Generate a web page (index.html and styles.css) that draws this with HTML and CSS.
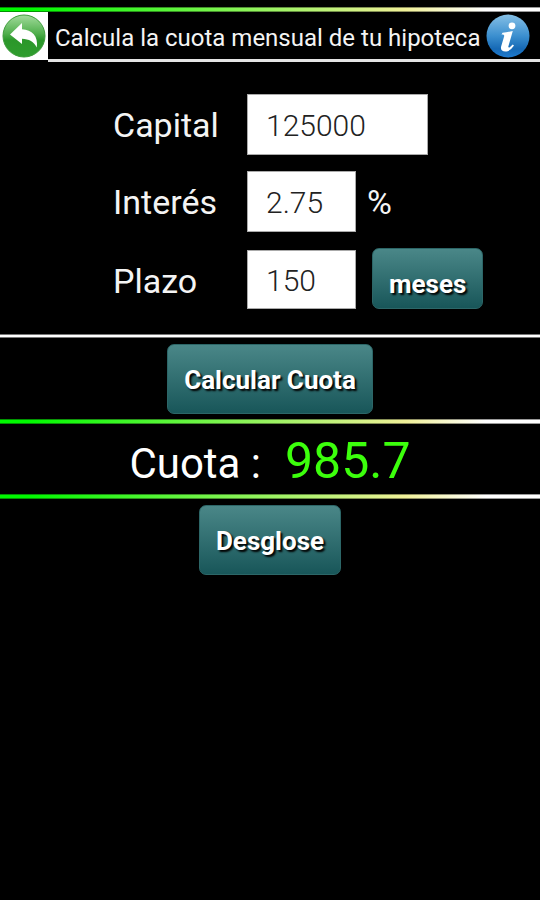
FILE: index.html
```html
<!DOCTYPE html>
<html lang="es">
<head>
<meta charset="utf-8">
<meta name="viewport" content="width=device-width, initial-scale=1">
<title>Calcula la cuota mensual de tu hipoteca</title>
<link rel="stylesheet" href="styles.css">
</head>
<body>
<header class="header">
  <div class="rule rule-gradient"></div>
  <div class="bar">
    <button class="back" type="button" aria-label="Volver">
      <svg width="44" height="44" viewBox="0 0 44 44" aria-hidden="true">
        <defs>
          <linearGradient id="green" x1="0" y1="0" x2="0" y2="1">
            <stop offset="0" stop-color="#a2dc9c"/>
            <stop offset=".45" stop-color="#4fae4b"/>
            <stop offset=".6" stop-color="#2b972a"/>
            <stop offset="1" stop-color="#2f9d2e"/>
          </linearGradient>
        </defs>
        <circle cx="22" cy="22" r="21" fill="url(#green)" stroke="#3d9c3a" stroke-width="1"/>
        <path d="M8 20.500 20 9v6.200c10 .3 16.500 7 14.800 18.300C32 27.500 27 25 20 24.700v5.300z" fill="#fff"/>
      </svg>
    </button>
    <div class="heading">
      <h1 class="title">Calcula la cuota mensual de tu hipoteca</h1>
      <button class="info" type="button" aria-label="Información">
        <svg width="44" height="44" viewBox="0 0 44 44" aria-hidden="true">
          <defs>
            <linearGradient id="blue" x1="0" y1="0" x2="0" y2="1">
              <stop offset="0" stop-color="#86c0e6"/>
              <stop offset=".5" stop-color="#3b8fcf"/>
              <stop offset=".8" stop-color="#1669b5"/>
              <stop offset="1" stop-color="#1e7bd0"/>
            </linearGradient>
          </defs>
          <circle cx="22" cy="22" r="21.500" fill="url(#blue)"/>
          <circle cx="26" cy="11.800" r="3.400" fill="#fff"/>
          <path d="M16.500 18.700c3.200-.2 6.500-.8 10.300-1.700l-4.400 15.200c-.4 1.500.6 1.700 1.400 1.100l2.900-2.700 1.300 1c-2.500 3.700-5.400 5.900-8.600 5.900-3.600 0-5.100-2.200-4.200-5.200l2.900-9.700c.4-1.400-.1-1.900-2.600-2z" fill="#fff"/>
        </svg>
      </button>
    </div>
  </div>
</header>

<main>
  <form class="form">
    <div class="row">
      <label class="label" for="capital">Capital</label>
      <input class="field field-wide" id="capital" type="text" inputmode="numeric" value="125000">
    </div>
    <div class="row">
      <label class="label" for="interes">Interés</label>
      <input class="field" id="interes" type="text" inputmode="decimal" value="2.75">
      <span class="unit">%</span>
    </div>
    <div class="row row-term">
      <label class="label" for="plazo">Plazo</label>
      <input class="field" id="plazo" type="text" inputmode="numeric" value="150">
      <button class="button button-unit" type="button">meses</button>
    </div>
  </form>

  <div class="rule rule-white"></div>
  <div class="action">
    <button class="button" type="button">Calcular Cuota</button>
  </div>
  <div class="rule rule-gradient"></div>
  <p class="result">
    <span class="result-label">Cuota :</span>
    <output class="result-value" for="capital interes plazo">985.7</output>
  </p>
  <div class="rule rule-gradient"></div>
  <div class="action">
    <button class="button" type="button">Desglose</button>
  </div>
</main>
</body>
</html>
```
FILE: styles.css
```css
* {
  box-sizing: border-box;
}

body {
  margin: 0;
  min-height: 100vh;
  background: #000;
  color: #f4f4f4;
  font-family: Roboto, "Liberation Sans", sans-serif;
}

button {
  font: inherit;
  cursor: pointer;
}

.header {
  padding-top: 7px;
}

.rule {
  height: 5px;
}

.rule-gradient {
  background:
    linear-gradient(to bottom, rgb(0 0 0 / 40%) 1px, transparent 1px, transparent 4px, rgb(0 0 0 / 40%) 4px),
    linear-gradient(to right, #00f800 5%, #f0f098 75%, #fff 90%);
}

.rule-white {
  height: 4px;
  border: solid #777;
  border-width: 1px 0;
  background: #fff;
}

.bar {
  display: flex;
}

.back,
.info {
  display: grid;
  place-items: center;
  flex: none;
  padding: 0;
  border: 0;
  background: none;
}

.back {
  width: 48px;
  height: 48px;
  background: #fff;
}

.heading {
  display: flex;
  flex: 1;
  align-items: center;
  justify-content: space-between;
  height: 50px;
  padding: 0 10px 0 7px;
  border-bottom: 3px solid #e4e4e4;
}

.title {
  margin: 0;
  padding-top: 4px;
  font-size: 24px;
  font-weight: 400;
  line-height: 28px;
  white-space: nowrap;
}

.form {
  display: grid;
  gap: 16px;
  padding: 32px 0 25px 113px;
}

.row {
  display: flex;
  align-items: center;
}

.label {
  width: 134px;
  font-size: 34px;
}

.field {
  width: 109px;
  height: 61px;
  padding: 2px 18px 0;
  border: 1px solid #aaa;
  border-radius: 0;
  background: #fff;
  color: #222;
  font: 300 30px Roboto, "Liberation Sans", sans-serif;
}

.field-wide {
  width: 181px;
}

.row-term {
  align-items: flex-end;
}

.row-term .label {
  line-height: 56px;
}

.row-term .field {
  height: 59px;
}

.unit {
  margin-left: 11px;
  font-size: 34px;
}

.button {
  height: 70px;
  padding: 2px 16px 0;
  border: 1px solid #2c6667;
  border-radius: 7px;
  background: linear-gradient(#4a8788, #185659);
  color: #fff;
  font-size: 26px;
  font-weight: 700;
  text-shadow: 2px 2px 2px #000;
}

.button-unit {
  height: 61px;
  margin-left: 16px;
  padding-top: 10px;
}

.action {
  display: flex;
  justify-content: center;
  padding: 6px 0 5px;
}

.result {
  display: flex;
  align-items: baseline;
  justify-content: center;
  gap: 24px;
  height: 70px;
  margin: 0;
  line-height: 74px;
  color: #fff;
}

.result-label {
  font-size: 42px;
}

.result-value {
  color: #3cff0c;
  font-size: 50px;
}
```
